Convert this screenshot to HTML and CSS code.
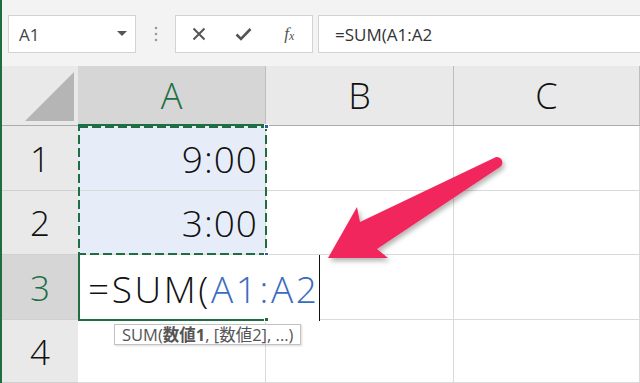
FILE: index.html
```html
<!DOCTYPE html>
<html>
<head>
    <title>SUM formula</title>
    <link rel="stylesheet" href="styles.css">
</head>
<body>
<div class="page">
    <div class="window">
        <div class="toolbar">
            <div class="namebox">
                <span>A1</span>
                <svg width="10" height="6" viewBox="0 0 10 6"><path d="M0 0h10L5 5z" fill="#555"/></svg>
            </div>
            <div class="grip">
                <svg width="4" height="16" viewBox="0 0 4 16"><circle cx="2" cy="2" r="1.3" fill="#999"/><circle cx="2" cy="8" r="1.3" fill="#999"/><circle cx="2" cy="14" r="1.3" fill="#999"/></svg>
            </div>
            <div class="fxbox">
                <div class="fxbtn">
                    <svg width="14" height="14" viewBox="0 0 14 14"><path d="M1.5 1.5l11 11M12.5 1.5l-11 11" stroke="#555" stroke-width="2" fill="none"/></svg>
                </div>
                <div class="fxbtn">
                    <svg width="17" height="14" viewBox="0 0 17 14"><path d="M1.5 7.5l4.5 4.5L15.5 2" stroke="#555" stroke-width="2.6" fill="none"/></svg>
                </div>
                <div class="fxbtn fx"><i>f</i><i class="x">x</i></div>
            </div>
            <div class="formula">=SUM(A1:A2</div>
        </div>

        <div class="sheet">
            <div class="corner">
                <svg width="49" height="49" viewBox="0 0 49 49"><path d="M49 0V49H0z" fill="#b5b5b5"/></svg>
            </div>
            <div class="colhead active">A</div>
            <div class="colhead">B</div>
            <div class="colhead">C</div>

            <div class="rowhead">1</div>
            <div class="cell picked">9:00</div>
            <div class="cell"></div>
            <div class="cell"></div>

            <div class="rowhead">2</div>
            <div class="cell picked">3:00</div>
            <div class="cell"></div>
            <div class="cell"></div>

            <div class="rowhead active">3</div>
            <div class="cell"></div>
            <div class="cell"></div>
            <div class="cell"></div>

            <div class="rowhead">4</div>
            <div class="cell"></div>
            <div class="cell"></div>
            <div class="cell"></div>

            <div class="range">
                <svg width="189" height="129" viewBox="0 0 189 129"><rect x="1" y="1" width="187" height="127" fill="none" stroke="#1f6e43" stroke-width="2" stroke-dasharray="9 4"/></svg>
            </div>
            <div class="handle h1"></div>
            <div class="handle h2"></div>
            <div class="editor"><span>=SUM(</span><span class="ref">A1:A2</span></div>
            <div class="handle h3"></div>
            <div class="tip">SUM(<b>数値1</b>, [数値2], ...)</div>
        </div>
    </div>

    <svg class="arrow" width="640" height="383" viewBox="0 0 640 383">
        <defs>
            <filter id="shade" x="-10%" y="-10%" width="130%" height="140%">
                <feDropShadow dx="2" dy="3" stdDeviation="2.5" flood-color="#000" flood-opacity="0.3"/>
            </filter>
        </defs>
        <path d="M328 258 L357 207 L360 222 L494 158 A5 5 0 0 1 500 167 L377 249 L388 258 Z" fill="#f0285c" filter="url(#shade)"/>
    </svg>
</div>
</body>
</html>
```

FILE: styles.css
```css
* {
    margin: 0;
    padding: 0;
    box-sizing: border-box;
}

body {
    font-family: "Open Sans", "Noto Sans CJK JP", sans-serif;
    background: #fff;
}

.page {
    position: relative;
    width: 640px;
    height: 383px;
    overflow: hidden;
}

.window {
    height: 100%;
    border-left: 2px solid #1e6e42;
}

/* formula bar */
.toolbar {
    display: flex;
    height: 66px;
    padding: 15px 0 0 6px;
    background: #f3f3f3;
}

.namebox {
    display: flex;
    align-items: center;
    justify-content: space-between;
    width: 128px;
    height: 38px;
    padding: 0 8px 0 10px;
    background: #fff;
    border: 1px solid #d3d3d3;
    font-size: 17px;
    color: #444;
}

.grip {
    display: flex;
    align-items: center;
    justify-content: center;
    width: 39px;
    height: 38px;
}

.fxbox {
    display: flex;
    width: 138px;
    height: 38px;
    background: #fff;
    border: 1px solid #d3d3d3;
}

.fxbtn {
    display: flex;
    align-items: center;
    justify-content: center;
    width: 46px;
}

.fx {
    font-family: "Liberation Serif", serif;
    font-size: 17px;
    color: #555;
}

.fx .x {
    font-size: 12px;
    margin-top: 5px;
}

.formula {
    flex: 1;
    height: 38px;
    margin-left: 5px;
    padding: 7px 0 0 16px;
    background: #fff;
    border: 1px solid #d3d3d3;
    border-right: none;
    font-size: 17px;
    color: #333;
}

/* grid */
.sheet {
    position: relative;
    display: grid;
    grid-template-columns: 76px 188px 188px 1fr;
    grid-template-rows: 60px 65px 64px 65px 1fr;
    height: 317px;
    font-weight: 300;
}

.corner {
    display: flex;
    align-items: flex-end;
    justify-content: flex-end;
    padding: 0 4px 4px 0;
    background: #e9e9e9;
    border-bottom: 1px solid #ababab;
}

.colhead {
    display: flex;
    align-items: center;
    justify-content: center;
    background: #e9e9e9;
    border-right: 1px solid #bdbdbd;
    border-bottom: 1px solid #ababab;
    font-size: 36px;
    color: #111;
}

.colhead.active {
    background: #d6d6d6;
    color: #1f6e43;
    border-bottom: 2px solid #1f6e43;
}

.rowhead {
    display: flex;
    align-items: center;
    justify-content: center;
    background: #e9e9e9;
    border-bottom: 1px solid #d0d0d0;
    font-size: 35px;
    color: #111;
}

.rowhead.active {
    background: #d6d6d6;
    color: #1f6e43;
}

.cell {
    display: flex;
    align-items: center;
    justify-content: flex-end;
    padding-right: 7px;
    background: #fff;
    border-right: 1px solid #dadada;
    border-bottom: 1px solid #dadada;
    font-size: 37px;
    letter-spacing: 1px;
    color: #111;
}

.cell.picked {
    background: #e7edf8;
}

/* selection overlays */
.range {
    position: absolute;
    left: 76px;
    top: 60px;
    width: 189px;
    height: 129px;
}

.range svg {
    display: block;
}

.handle {
    position: absolute;
    left: 262px;
    width: 5px;
    height: 5px;
    background: #1f6e43;
    border: 1px solid #fff;
}

.h1 { top: 58px; background: #2b5fa8; }
.h2 { top: 186px; background: #2b5fa8; }
.h3 { top: 251px; }

.editor {
    position: absolute;
    left: 76px;
    top: 189px;
    width: 242px;
    height: 66px;
    display: flex;
    align-items: center;
    padding-left: 8px;
    background: #fff;
    border-left: 2px solid #1f6e43;
    border-right: 1px solid #111;
    font-size: 37px;
    letter-spacing: 2.6px;
    color: #111;
}

.editor::after {
    content: "";
    position: absolute;
    left: -2px;
    bottom: 0;
    width: 190px;
    height: 2px;
    background: #1f6e43;
}

.ref {
    color: #3a6cc0;
}

.tip {
    position: absolute;
    left: 112px;
    top: 258px;
    height: 21px;
    padding: 0 7px;
    background: #fff;
    border: 1px solid #c2c2c2;
    box-shadow: 1px 1px 2px rgba(0, 0, 0, 0.15);
    font-size: 16.5px;
    font-weight: 400;
    line-height: 19px;
    color: #555;
    white-space: nowrap;
}

.arrow {
    position: absolute;
    left: 0;
    top: 0;
    pointer-events: none;
}
```
